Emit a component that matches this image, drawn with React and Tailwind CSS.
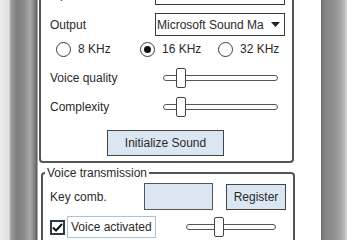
import React from "react";

function Radio({ label, checked }) {
  return (
    <div className="flex items-center gap-[7px]">
      <span className="w-[15px] h-[15px] rounded-full border-[1.5px] border-[#3a3a3a] bg-white flex items-center justify-center">
        {checked && <span className="w-[7px] h-[7px] rounded-full bg-[#111]" />}
      </span>
      <span>{label}</span>
    </div>
  );
}

function Slider({ width, offset }) {
  return (
    <div className="relative h-[20px]" style={{ width }}>
      <div className="absolute left-0 right-0 top-[7px] h-[6px] rounded-full border-[1.5px] border-[#555] bg-white" />
      <div
        className="absolute top-0 w-[10px] h-[20px] border-[1.5px] border-[#444] bg-white rounded-[2px]"
        style={{ left: offset }}
      />
    </div>
  );
}

function Select({ text }) {
  return (
    <div className="w-[130px] h-[23px] border-[1.5px] border-[#3a3a3a] bg-white flex items-center pl-[1px] pr-[4px]">
      <span className="flex-1 overflow-hidden whitespace-nowrap">{text}</span>
      <svg width="9" height="6" viewBox="0 0 9 6">
        <path d="M0 0 L9 0 L4.5 5 Z" fill="#222" />
      </svg>
    </div>
  );
}

export default function App() {
  return (
    <div
      className="w-[360px] h-[240px] overflow-hidden bg-white flex text-[12px] text-[#2a2a2a]"
      style={{ fontFamily: '"Liberation Sans", Arial, sans-serif' }}
    >
      {/* left bezel */}
      <div className="w-[39px] h-full shrink-0 bg-[linear-gradient(to_right,#ececec_0px,#e0e0e0_9px,#9c9c9c_11px,#7e7e7e_17px,#8a8a8a_24px,#aaaaaa_30px,#7a7a7a_35px,#555_37px,#ffffff_38px)]" />

      {/* screen */}
      <div className="w-[255px] shrink-0 flex flex-col">
        <div className="-mt-[18px] border-[2px] border-t-0 border-[#555] rounded-b-[4px] pl-[9px] pr-[7px] pb-[5px] flex flex-col">
          <div className="flex items-center justify-between h-[23px]">
            <span>Input device</span>
            <Select text="" />
          </div>
          <div className="flex items-center justify-between h-[23px] mt-[8px]">
            <span>Output</span>
            <Select text="Microsoft Sound Ma" />
          </div>
          <div className="flex items-center h-[18px] mt-[4px] pl-[6px]">
            <div className="w-[84px]">
              <Radio label="8 KHz" />
            </div>
            <div className="w-[78px]">
              <Radio label="16 KHz" checked />
            </div>
            <Radio label="32 KHz" />
          </div>
          <div className="flex items-center justify-between h-[20px] mt-[10px]">
            <span>Voice quality</span>
            <div className="mr-[7px]">
              <Slider width={115} offset={13} />
            </div>
          </div>
          <div className="flex items-center justify-between h-[20px] mt-[9px]">
            <span>Complexity</span>
            <div className="mr-[7px]">
              <Slider width={115} offset={13} />
            </div>
          </div>
          <div className="flex justify-center mt-[13px] pr-[4px]">
            <div className="w-[117px] h-[26px] border-[1.5px] border-[#444] bg-[#dae6f2] flex items-center justify-center">
              Initialize Sound
            </div>
          </div>
        </div>

        <fieldset className="mt-[3px] ml-[2px] border-[2px] border-[#555] rounded-[4px] pl-[7px] pr-[7px] pb-[4px] h-[110px] shrink-0">
          <legend className="px-[2px] -ml-[5px] leading-[14px]">Voice transmission</legend>
          <div className="flex items-center h-[27px] mt-[3px]">
            <span className="w-[94px]">Key comb.</span>
            <div className="w-[69px] h-[27px] border-[1.5px] border-[#555] bg-[#dae6f2]" />
            <div className="ml-[13px] w-[60px] h-[26px] border-[1.5px] border-[#444] bg-[#dae6f2] flex items-center justify-center">
              Register
            </div>
          </div>
          <div className="flex items-center h-[22px] mt-[6px]">
            <span className="w-[15px] h-[15px] border-[2px] border-[#2d3a4a] bg-white flex items-center justify-center">
              <svg width="11" height="9" viewBox="0 0 11 9">
                <path d="M1 4.5 L4 7.5 L10 1" stroke="#111" strokeWidth="2" fill="none" />
              </svg>
            </span>
            <span className="ml-[2px] px-[3px] h-[22px] flex items-center border border-[#a8c4d8]">
              Voice activated
            </span>
            <div className="ml-[30px]">
              <Slider width={90} offset={28} />
            </div>
          </div>
        </fieldset>
      </div>

      <div className="w-[27px] shrink-0" />
      {/* right bezel */}
      <div className="w-[26px] h-full shrink-0 bg-[linear-gradient(to_right,#6e6e6e_0px,#858585_4px,#8e8e8e_12px,#a2a2a2_19px,#bdbdbd_24px,#d8d8d8_26px)]" />
    </div>
  );
}
